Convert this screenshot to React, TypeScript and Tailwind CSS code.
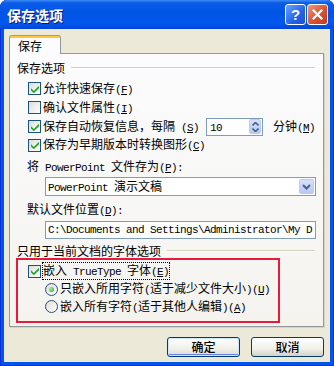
import React from "react";

const MONO = "font-['Liberation_Mono',monospace] text-[11px] tracking-[-0.6px]";

function M({ children }: { children: React.ReactNode }) {
  return <span className={MONO}>{children}</span>;
}

function T({ s }: { s: string }) {
  const parts = s.split(/([\x20-\x7E]+)/).filter((p) => p.length > 0);
  return (
    <>
      {parts.map((p, i) =>
        /^[\x20-\x7E]+$/.test(p) ? <M key={i}>{p}</M> : <span key={i}>{p}</span>
      )}
    </>
  );
}

function Acc({ k, tail = "" }: { k: string; tail?: string }) {
  return (
    <span className={MONO}>
      (<span className="underline decoration-1 underline-offset-[1px]">{k}</span>){tail}
    </span>
  );
}

function Check({ on }: { on: boolean }) {
  return (
    <span className="w-[13px] h-[13px] shrink-0 border border-[#1C5180] bg-[linear-gradient(135deg,#DCDCD7,#FFFFFF)] flex items-center justify-center">
      {on && (
        <svg width="8" height="8" viewBox="0 0 8 8">
          <path d="M0 3.2 L2.8 6 L8 0.8 L8 3.2 L2.8 8.2 L0 5.4 Z" fill="#21A121" />
        </svg>
      )}
    </span>
  );
}

function Radio({ on }: { on: boolean }) {
  return (
    <span className="w-[13px] h-[13px] shrink-0 rounded-full border border-[#2C4F7A] bg-[linear-gradient(135deg,#DCDCD7,#FFFFFF)] flex items-center justify-center">
      {on && (
        <span className="w-[5px] h-[5px] rounded-full bg-[radial-gradient(circle_at_35%_35%,#A8F0A4,#21A121)]" />
      )}
    </span>
  );
}

function SpinBtn() {
  return (
    <span className="w-[12px] h-[15px] rounded-[2px] border border-[#B9CCF9] bg-[linear-gradient(180deg,#D4E0FD,#B5C9F7)] flex flex-col items-center justify-center gap-[2px]">
      <svg width="7" height="4" viewBox="0 0 7 4">
        <path d="M0.5 3.5 L3.5 0.5 L6.5 3.5" fill="none" stroke="#4D6185" strokeWidth="1.6" />
      </svg>
      <svg width="7" height="4" viewBox="0 0 7 4">
        <path d="M0.5 0.5 L3.5 3.5 L6.5 0.5" fill="none" stroke="#4D6185" strokeWidth="1.6" />
      </svg>
    </span>
  );
}

function DropBtn() {
  return (
    <span className="w-[15px] h-[15px] rounded-[2px] border border-[#B9CCF9] bg-[linear-gradient(180deg,#D4E0FD,#B5C9F7)] flex items-center justify-center">
      <svg width="9" height="6" viewBox="0 0 9 6">
        <path d="M1 1 L4.5 4.5 L8 1" fill="none" stroke="#4D6185" strokeWidth="2" />
      </svg>
    </span>
  );
}

function GroupHeader({ label }: { label: string }) {
  return (
    <div className="flex items-center h-[14px] pl-[7px] pr-[8px]">
      <span className="whitespace-nowrap">{label}</span>
      <span className="flex-1 ml-[6px] h-[2px] border-t border-t-[#D0D0BF] border-b border-b-white" />
    </div>
  );
}

export default function App() {
  return (
    <div className="w-[334px] h-[366px] bg-[#0055E5] rounded-t-[7px] flex flex-col overflow-hidden shadow-[inset_1px_0_0_#0831D9,inset_-1px_0_0_#0831D9,inset_0_-1px_0_#0831D9] font-['Noto_Sans_CJK_SC',sans-serif] text-[12px] leading-[14px] text-black">
      {/* Title bar */}
      <div className="h-[29px] shrink-0 flex items-center pl-[7px] pr-[6px] rounded-t-[7px] bg-[linear-gradient(180deg,#3C8DF5_0%,#0A5DE8_10%,#0054E3_45%,#0058EE_80%,#0046D5_100%)]">
        <span className="flex-1 text-white font-bold text-[14px] [text-shadow:1px_1px_0_#0A1883]">保存选项</span>
        <div className="flex gap-[1px]">
          <span className="w-[21px] h-[21px] rounded-[3px] border border-white bg-[linear-gradient(135deg,#6AA6FF,#2461E8_60%,#1A52D8)] flex items-center justify-center text-white font-bold text-[15px] font-['Liberation_Sans',sans-serif] leading-none">
            ?
          </span>
          <span className="w-[21px] h-[21px] rounded-[3px] border border-white bg-[linear-gradient(135deg,#EC9A7C,#D9522F_55%,#C23A17)] flex items-center justify-center">
            <svg width="11" height="11" viewBox="0 0 11 11">
              <path d="M1.5 1.5 L9.5 9.5 M9.5 1.5 L1.5 9.5" stroke="white" strokeWidth="2.2" strokeLinecap="square" />
            </svg>
          </span>
        </div>
      </div>

      {/* Body */}
      <div className="flex-1 mx-[4px] mb-[4px] bg-[#ECE9D8] flex flex-col pt-[6px] pl-[5px] pr-[6px]">
        {/* Tab */}
        <div className="flex">
          <div className="relative z-10 -mb-px w-[52px] h-[19px] rounded-t-[3px] border-x border-[#919B9C] bg-[linear-gradient(180deg,#E68B2C_0px,#E68B2C_1px,#FFC73C_1px,#FFC73C_3px,#FCFCFE_3px)] flex items-center pl-[8px] pt-[2px]">
            保存
          </div>
        </div>

        {/* Panel */}
        <div className="h-[274px] border border-[#919B9C] bg-[linear-gradient(180deg,#FCFCFE,#F4F3EE)] shadow-[1px_1px_0_#D6D3C4] flex flex-col pt-[7px] pb-[3px]">
          <GroupHeader label="保存选项" />

          <div className="mt-[4px] flex flex-col">
            <div className="flex items-center h-[19px] pl-[18px] gap-[2px]">
              <Check on />
              <span className="whitespace-nowrap">允许快速保存<Acc k="F" /></span>
            </div>
            <div className="flex items-center h-[19px] pl-[18px] gap-[2px]">
              <Check on={false} />
              <span className="whitespace-nowrap">确认文件属性<Acc k="I" /></span>
            </div>
            <div className="flex items-center h-[19px] pl-[18px]">
              <div className="w-[178px] flex items-center gap-[2px]">
                <Check on />
                <span className="whitespace-nowrap">保存自动恢复信息，每隔<M> </M><Acc k="S" /></span>
              </div>
              <div className="w-[57px] h-[18px] border border-[#7F9DB9] bg-white flex items-center pl-[3px] pr-[1px]">
                <span className="flex-1"><M>10</M></span>
                <SpinBtn />
              </div>
              <span className="ml-[10px] whitespace-nowrap">分钟<Acc k="M" /></span>
            </div>
            <div className="flex items-center h-[18px] pl-[18px] gap-[2px]">
              <Check on />
              <span className="whitespace-nowrap">保存为早期版本时转换图形<Acc k="C" /></span>
            </div>
          </div>

          <div className="mt-[6px] h-[14px] pl-[17px] flex items-center">
            <span className="whitespace-nowrap"><T s="将 PowerPoint 文件存为" /><Acc k="P" tail=":" /></span>
          </div>
          <div className="mt-[3px] ml-[35px] w-[271px] h-[19px] border border-[#7F9DB9] bg-white flex items-center pl-[2px] pr-[1px]">
            <span className="flex-1 whitespace-nowrap"><T s="PowerPoint 演示文稿" /></span>
            <DropBtn />
          </div>

          <div className="mt-[7px] h-[14px] pl-[17px] flex items-center">
            <span className="whitespace-nowrap">默认文件位置<Acc k="D" tail=":" /></span>
          </div>
          <div className="mt-[4px] ml-[35px] w-[271px] h-[18px] border border-[#7F9DB9] bg-white flex items-center pl-[2px] overflow-hidden">
            <span className={MONO + " whitespace-nowrap"}>{"C:\\Documents and Settings\\Administrator\\My D"}</span>
          </div>

          <div className="mt-[5px]">
            <GroupHeader label="只用于当前文档的字体选项" />
          </div>

          <div className="ml-[6px] w-[264px] h-[65px] border-2 border-[#E8193F] flex flex-col pt-[2px]">
            <div className="flex items-center h-[18px] pl-[10px] gap-[1px]">
              <Check on />
              <span className="h-[18px] flex items-center border border-dotted border-black whitespace-nowrap">
                <span><T s="嵌入 TrueType 字体" /><Acc k="E" /></span>
              </span>
            </div>
            <div className="flex items-center h-[18px] pl-[27px] gap-[2px]">
              <Radio on />
              <span className="whitespace-nowrap"><T s="只嵌入所用字符(适于减少文件大小)" /><Acc k="U" /></span>
            </div>
            <div className="flex items-center h-[17px] pl-[27px] gap-[2px]">
              <Radio on={false} />
              <span className="whitespace-nowrap"><T s="嵌入所有字符(适于其他人编辑)" /><Acc k="A" /></span>
            </div>
          </div>
        </div>

        {/* Buttons */}
        <div className="mt-[10px] flex justify-end gap-[11px]">
          <button className="w-[73px] h-[20px] rounded-[3px] border border-[#003C74] bg-[linear-gradient(180deg,#FFFFFF,#F0F0EA_60%,#DCD8CC)] shadow-[inset_0_0_0_1px_#CEE7FF,inset_0_-2px_0_0_#6982EE] font-medium flex items-center justify-center">
            确定
          </button>
          <button className="w-[73px] h-[20px] rounded-[3px] border border-[#003C74] bg-[linear-gradient(180deg,#FFFFFF,#F0F0EA_60%,#D6D0C5)] font-medium flex items-center justify-center">
            取消
          </button>
        </div>
      </div>
    </div>
  );
}
